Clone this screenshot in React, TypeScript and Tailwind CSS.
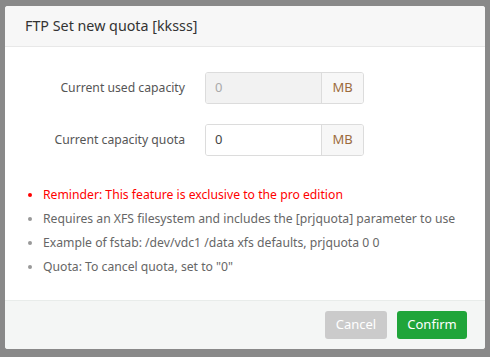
export default function App() {
  return (
    <div className="w-[490px] h-[357px] bg-[#898989] pt-[6px] pl-[5px] font-['Noto_Sans',sans-serif]">
      <div className="w-[480px] h-[343px] bg-white rounded-[3px] flex flex-col overflow-hidden">
        <div className="h-[41px] bg-[#f7f7f7] border-b border-[#e8e8e8] flex items-center pl-[20px] text-[14.3px] text-[#333]">
          FTP Set new quota [kksss]
        </div>
        <div className="flex-1 flex flex-col">
          <div className="pt-[25px] flex flex-col gap-[20px]">
            <div className="flex items-center">
              <label className="w-[180px] text-right text-[12.2px] text-[#555]">Current used capacity</label>
              <div className="ml-[20px] flex h-[32px] w-[159px] border border-[#dcdcdc] rounded-[3px] overflow-hidden">
                <input
                  disabled
                  value="0"
                  className="flex-1 min-w-0 bg-[#f2f2f2] pl-[9px] text-[13px] text-[#aaa] outline-none"
                />
                <span className="w-[42px] border-l border-[#dcdcdc] bg-[#f7f7f7] flex items-center justify-center text-[13px] text-[#9c6b3c]">
                  MB
                </span>
              </div>
            </div>
            <div className="flex items-center">
              <label className="w-[180px] text-right text-[12.2px] text-[#555]">Current capacity quota</label>
              <div className="ml-[20px] flex h-[32px] w-[159px] border border-[#dcdcdc] rounded-[3px] overflow-hidden">
                <input
                  defaultValue="0"
                  className="flex-1 min-w-0 bg-white pl-[9px] text-[13px] text-[#444] outline-none"
                />
                <span className="w-[42px] border-l border-[#dcdcdc] bg-[#f7f7f7] flex items-center justify-center text-[13px] text-[#9c6b3c]">
                  MB
                </span>
              </div>
            </div>
          </div>
          <ul className="mt-[27px] pl-[38px] list-disc text-[12.2px] leading-[24px] text-[#666] marker:text-[#999]">
            <li className="text-[#ff0000] marker:text-[#ff0000]">Reminder: This feature is exclusive to the pro edition</li>
            <li>Requires an XFS filesystem and includes the [prjquota] parameter to use</li>
            <li>Example of fstab: /dev/vdc1 /data xfs defaults, prjquota 0 0</li>
            <li>Quota: To cancel quota, set to "0"</li>
          </ul>
        </div>
        <div className="h-[49px] bg-[#f4f6f5] border-t border-[#e8ecea] flex items-center justify-end gap-[10px] pr-[18px]">
          <button className="h-[28px] w-[62px] rounded-[3px] bg-[#cbcbcb] text-white text-[13px]">Cancel</button>
          <button className="h-[28px] w-[70px] rounded-[3px] bg-[#20a53a] text-white text-[13px]">Confirm</button>
        </div>
      </div>
    </div>
  );
}
